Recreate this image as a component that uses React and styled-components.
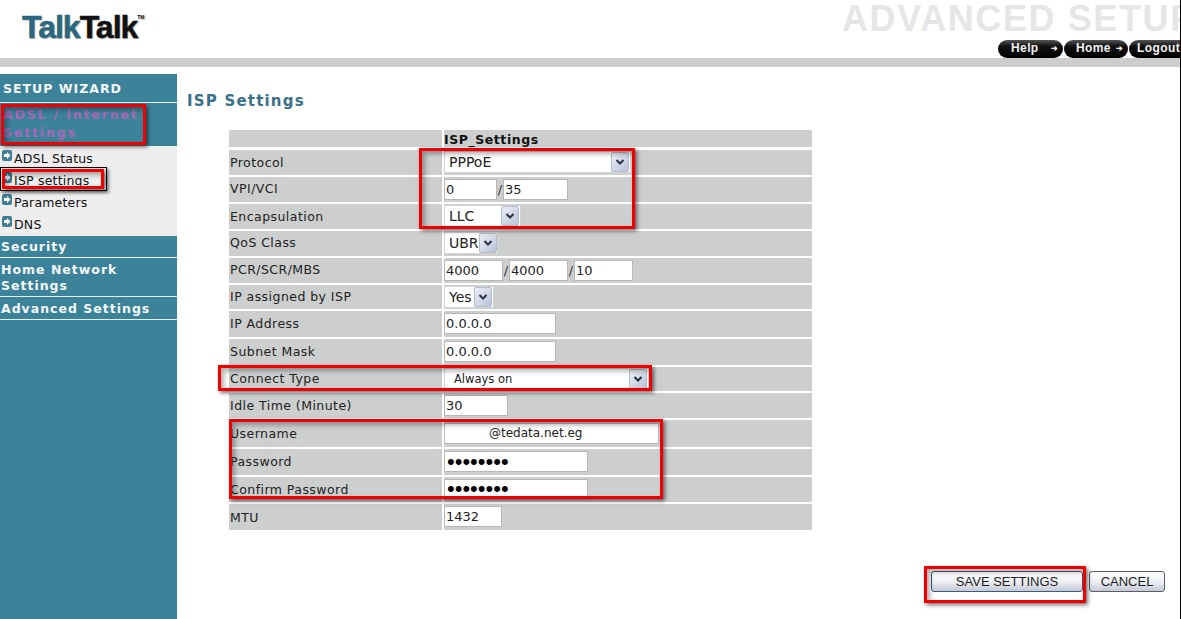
import styled, { createGlobalStyle } from "styled-components";

const Global = createGlobalStyle`
    html, body { margin: 0; padding: 0; background: #fff; }
    body { width: 1181px; height: 619px; overflow: hidden; font-family: "DejaVu Sans", Verdana, sans-serif; }
`
const Page = styled.div`
    position: relative;
    width: 1181px;
    height: 619px;
    box-sizing: border-box;
    border-right: 1px solid #000;
    overflow: hidden;
`
const Header = styled.div`
    height: 58px;
    display: flex;
    justify-content: space-between;
`
const Logo = styled.div`
    padding: 8px 0 0 22px;
    font: bold 32px "Liberation Sans", Arial, sans-serif;
    letter-spacing: -1px;
    line-height: 38px;
    color: #111;
    -webkit-text-stroke: .5px currentColor;
    text-shadow: 1px 1px 1px rgba(0,0,0,.3);
    display: flex;
    align-items: flex-start;
    width: 130px;
    span { color: #2c6780; }
    sup { font-size: 5px; line-height: 8px; letter-spacing: 0; margin-top: 5px; -webkit-text-stroke: 0; }
`
const HeaderRight = styled.div`
    width: 340px;
    overflow: hidden;
    white-space: nowrap;
`
const BigTitle = styled.div`
    font: bold 36px/38px "Liberation Sans", Arial, sans-serif;
    color: #e6e6e6;
    letter-spacing: 1.6px;
    height: 40px;
    padding-left: 2px;
`
const NavRow = styled.div`
    display: flex;
    padding-left: 158px;
    gap: 1px;
`
const NavPill = styled.div`
    width: ${(p) => p.w}px;
    flex: none;
    height: 18px;
    box-sizing: border-box;
    padding-left: ${(p) => p.pad || 13}px;
    border-radius: 9px;
    background: linear-gradient(#555 0%, #111 35%, #000 100%);
    color: #f2f2f2;
    font: bold 12px/17px "Liberation Sans", Arial, sans-serif;
    letter-spacing: .4px;
    display: flex;
    justify-content: space-between;
    i { font-style: normal; font-size: 8px; padding-right: 5px; }
`
const GrayBar = styled.div`
    height: 9px;
    background: #cccdcc;
`
const Body = styled.div`
    display: flex;
    height: 552px;
`
const Sidebar = styled.div`
    width: 177px;
    flex: none;
    margin-top: 7px;
    background: #3c8299;
`
const MenuHead = styled.div`
    height: ${(p) => p.h}px;
    box-sizing: border-box;
    padding: ${(p) => p.top}px 0 0 ${(p) => (p.upper ? 3 : 1)}px;
    border-bottom: ${(p) => (p.open ? "0" : "1px solid #e8eff2")};
    color: ${(p) => p.color || "#f4f7f8"};
    font-weight: bold;
    font-size: 12.5px;
    line-height: ${(p) => p.lh || 16}px;
    letter-spacing: ${(p) => p.ls || 1}px;
`
const SubMenu = styled.div`
    background: #eeeeee;
    height: 89px;
    padding-top: 1px;
`
const SubItem = styled.div`
    height: 22px;
    display: flex;
    align-items: flex-start;
    padding-left: 2px;
    font-size: 12.5px;
    line-height: 24px;
    color: #111;
    letter-spacing: .2px;
`
const Bullet = styled.svg`
    width: 10px;
    height: 11px;
    flex: none;
    margin: 3px 2px 0 0;
`
const Main = styled.div`
    flex: 1;
    display: flex;
    flex-direction: column;
    padding-left: 10px;
`
const Title = styled.h1`
    margin: 25px 0 0;
    height: 38px;
    font-size: 15px;
    line-height: 19px;
    font-weight: bold;
    letter-spacing: 1.2px;
    color: #3a7088;
`
const Table = styled.div`
    margin-left: 42px;
    width: 583px;
    display: flex;
    flex-direction: column;
`
const Row = styled.div`
    display: flex;
    height: ${(p) => p.h}px;
    margin-bottom: ${(p) => (p.gap === undefined ? 2 : p.gap)}px;
`
const Label = styled.div`
    width: 213px;
    flex: none;
    box-sizing: border-box;
    background: #cccfce;
    padding-left: 1px;
    margin-right: 2px;
    font-size: 12.5px;
    line-height: ${(p) => p.lh || 24}px;
    color: #222;
    letter-spacing: .45px;
`
const Value = styled.div`
    flex: 1;
    background: #cccfce;
    display: flex;
    align-items: center;
    box-sizing: border-box;
    padding-bottom: 1px;
    color: #222;
    font-size: 13px;
`
const HeadValue = styled(Value)`
    font-weight: bold;
    font-size: 12.5px;
    line-height: 19px;
    letter-spacing: .55px;
    color: #111;
    padding-bottom: 0;
    align-items: flex-start;
`
const Field = styled.input`
    width: ${(p) => p.w}px;
    height: 21px;
    box-sizing: border-box;
    flex: none;
    padding: 0 1px 0 ${(p) => p.pad || 1}px;
    margin: 0;
    border: 1px solid #b4b8b6;
    border-radius: 0;
    outline: none;
    background: #fff;
    color: #222;
    font: ${(p) => p.size || 13}px "DejaVu Sans", Verdana, sans-serif;
    &[type="password"] { font: 22px "Liberation Sans", Arial, sans-serif; color: #000; padding-left: 2px; }
`
const Slash = styled.span`
    width: 6px;
    flex: none;
    text-align: center;
    font-size: 13px;
    color: #333;
`
const Select = styled.div`
    width: ${(p) => p.w}px;
    height: 22px;
    box-sizing: border-box;
    flex: none;
    display: flex;
    justify-content: space-between;
    align-items: center;
    background: #fff;
    padding: 0 1px 0 ${(p) => p.pad || 4}px;
    font-size: ${(p) => p.size || 14}px;
    color: #222;
    border: 1px solid #d2d4d3;
`
const Arrow = styled.span`
    width: 16px;
    height: 18px;
    flex: none;
    display: flex;
    align-items: center;
    justify-content: center;
    border-radius: 2px;
    border: 1px solid #b5bccb;
    background: linear-gradient(135deg, #eef0f6, #b9c2d8);
`
const Actions = styled.div`
    margin-top: 41px;
    display: flex;
    gap: 6px;
    padding-left: 744px;
`
const Btn = styled.button`
    width: ${(p) => p.w}px;
    height: 21px;
    box-sizing: border-box;
    padding: 0;
    border: 1px solid ${(p) => (p.primary ? "#3d5c77" : "#5a5f66")};
    border-radius: 3px;
    background: linear-gradient(#ffffff 0%, #eef0f4 50%, #c5c9d6 100%);
    color: #1c1c1c;
    font: 13px/18px "Liberation Sans", Arial, sans-serif;
`
const Mark = styled.div`
    position: absolute;
    left: ${(p) => p.x}px;
    top: ${(p) => p.y}px;
    width: ${(p) => p.w}px;
    height: ${(p) => p.h}px;
    box-sizing: border-box;
    border: 3px solid #f00000;
    box-shadow: 2px 2px 4px rgba(0,0,0,.55), inset 3px 3px 5px rgba(0,0,0,.32);
    pointer-events: none;
`
const BlackMark = styled(Mark)`
    border: 1px solid #000;
    box-shadow: 2px 2px 3px rgba(0,0,0,.4);
`

const subItems = ["ADSL Status", "ISP settings", "Parameters", "DNS"]

const BulletIcon = () => (
    <Bullet viewBox="0 0 10 11">
        <rect x="0" y="0" width="10" height="11" rx="2" fill="#3f7f96" />
        <path d="M2 4h3V2l3.5 3.5L5 9V7H2z" fill="#fff" />
    </Bullet>
)

const Chevron = () => (
    <svg width="10" height="8" viewBox="0 0 10 8">
        <path d="M1.5 2 5 5.5 8.5 2" fill="none" stroke="#2a3140" strokeWidth="2" />
    </svg>
)

const Drop = ({ w, value, ...rest }) => (
    <Select w={w} {...rest}>
        {value}
        <Arrow><Chevron /></Arrow>
    </Select>
)

function App() {
    return (
        <Page>
            <Global />
            <Header>
                <Logo><span>Talk</span>Talk<sup>TM</sup></Logo>
                <HeaderRight>
                    <BigTitle>ADVANCED SETUP</BigTitle>
                    <NavRow>
                        <NavPill w={65}>Help <i>➔</i></NavPill>
                        <NavPill w={64} pad={12}>Home <i>➔</i></NavPill>
                        <NavPill w={64} pad={8}>Logout</NavPill>
                    </NavRow>
                </HeaderRight>
            </Header>
            <GrayBar />
            <Body>
                <Sidebar>
                    <MenuHead h={29} top={7} upper>SETUP WIZARD</MenuHead>
                    <MenuHead h={43} top={3} upper open lh={18} ls={1.85} color="#a868b8">ADSL / Internet Settings</MenuHead>
                    <SubMenu>
                        {subItems.map((s) => (
                            <SubItem key={s}><BulletIcon />{s}</SubItem>
                        ))}
                    </SubMenu>
                    <MenuHead h={22} top={3}>Security</MenuHead>
                    <MenuHead h={39} top={4}>Home Network Settings</MenuHead>
                    <MenuHead h={23} top={4}>Advanced Settings</MenuHead>
                </Sidebar>
                <Main>
                    <Title>ISP Settings</Title>
                    <Table>
                        <Row h={17} gap={3}><Label /><HeadValue>ISP_Settings</HeadValue></Row>
                        <Row h={25}><Label lh={26}>Protocol</Label><Value><Drop w={187} value="PPPoE" /></Value></Row>
                        <Row h={25}>
                            <Label>VPI/VCI</Label>
                            <Value>
                                <Field w={53} defaultValue="0" readOnly />
                                <Slash>/</Slash>
                                <Field w={65} defaultValue="35" readOnly />
                            </Value>
                        </Row>
                        <Row h={25}><Label lh={26}>Encapsulation</Label><Value><Drop w={77} value="LLC" /></Value></Row>
                        <Row h={25}><Label>QoS Class</Label><Value><Drop w={54} value="UBR" /></Value></Row>
                        <Row h={25}>
                            <Label>PCR/SCR/MBS</Label>
                            <Value>
                                <Field w={59} defaultValue="4000" readOnly />
                                <Slash>/</Slash>
                                <Field w={59} defaultValue="4000" readOnly />
                                <Slash>/</Slash>
                                <Field w={59} defaultValue="10" readOnly />
                            </Value>
                        </Row>
                        <Row h={24}><Label>IP assigned by ISP</Label><Value><Drop w={50} value="Yes" /></Value></Row>
                        <Row h={26}><Label lh={26}>IP Address</Label><Value><Field w={112} defaultValue="0.0.0.0" readOnly /></Value></Row>
                        <Row h={26}><Label lh={26}>Subnet Mask</Label><Value><Field w={112} defaultValue="0.0.0.0" readOnly /></Value></Row>
                        <Row h={24}><Label>Connect Type</Label><Value><Drop w={205} pad={9} size={11.5} value="Always on" /></Value></Row>
                        <Row h={25}><Label lh={26}>Idle Time (Minute)</Label><Value><Field w={64} defaultValue="30" readOnly /></Value></Row>
                        <Row h={27}>
                            <Label lh={27}>Username</Label>
                            <Value><Field w={215} pad={44} size={12} defaultValue="@tedata.net.eg" readOnly /></Value>
                        </Row>
                        <Row h={26}><Label lh={26}>Password</Label><Value><Field w={144} type="password" defaultValue="password" readOnly /></Value></Row>
                        <Row h={25}><Label lh={26}>Confirm Password</Label><Value><Field w={144} type="password" defaultValue="password" readOnly /></Value></Row>
                        <Row h={26} gap={0}><Label lh={27}>MTU</Label><Value><Field w={58} defaultValue="1432" readOnly /></Value></Row>
                    </Table>
                    <Actions>
                        <Btn w={152} primary>SAVE SETTINGS</Btn>
                        <Btn w={76}>CANCEL</Btn>
                    </Actions>
                </Main>
            </Body>
            <Mark x={1} y={104} w={145} h={41} />
            <BlackMark x={0} y={167} w={107} h={24} />
            <Mark x={2} y={169} w={102} h={20} />
            <Mark x={419} y={148} w={216} h={81} />
            <Mark x={218} y={365} w={434} h={26} />
            <Mark x={229} y={419} w={434} h={80} />
            <Mark x={924} y={566} w={162} h={37} />
        </Page>
    )
}

export default App
